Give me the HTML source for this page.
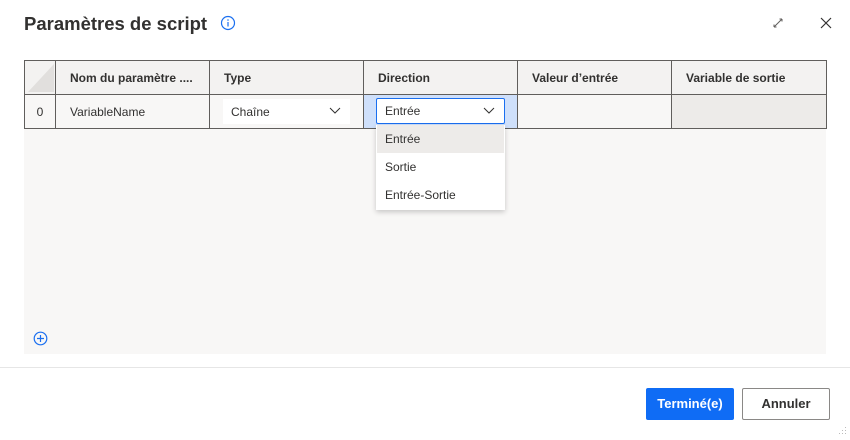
<!DOCTYPE html>
<html><head><style>
*{box-sizing:border-box;margin:0;padding:0}
body{width:850px;height:440px;background:#fff;font-family:"Segoe UI","Liberation Sans",sans-serif;color:#323130;position:relative;overflow:hidden}
.a{position:absolute}
.title{left:24px;top:13px;font-size:18.5px;font-weight:bold;color:#323130}
.grid{left:24px;top:60px;width:802px;height:294px;background:#f8f7f6}
table{position:absolute;left:24px;top:60px;border-collapse:collapse;font-size:12px}
td{border:1px solid #605e5c;height:34px;padding:0 0 0 14px}
thead td{background:#f3f2f1;font-weight:600;height:34px}
tbody td{background:#f8f7f6}
</style></head><body>
<div class="a title">Paramètres de script</div>
<svg class="a" style="left:220px;top:15px" width="16" height="16" viewBox="0 0 16 16"><circle cx="8" cy="8" r="6.5" fill="none" stroke-width="1.2" style="stroke:#1a6ff0"/><rect x="7.4" y="7" width="1.2" height="4.5" fill="#1a6ff0"/><circle cx="8" cy="5" r=".8" fill="#1a6ff0"/></svg>
<svg class="a" style="left:772px;top:17px" width="12" height="12" viewBox="0 0 12 12"><path d="M2 10L10 2M2 10V7.5M2 10H4.5M10 2V4.5M10 2H7.5" stroke="#605e5c" stroke-width="1" fill="none"/></svg>
<svg class="a" style="left:820px;top:17px" width="12" height="12" viewBox="0 0 12 12"><path d="M1 1L11 11M11 1L1 11" stroke="#323130" stroke-width="1.2"/></svg>
<div class="a grid"></div>
<table>
<thead><tr>
<td style="width:31px;padding:0;position:relative"><svg style="position:absolute;left:3px;top:3px" width="26" height="28"><path d="M26 0V28H0Z" fill="#e1dfdd"/></svg></td>
<td style="width:154px">Nom du paramètre ....</td>
<td style="width:154px">Type</td>
<td style="width:154px">Direction</td>
<td style="width:154px">Valeur d’entrée</td>
<td style="width:155px">Variable de sortie</td>
</tr></thead>
<tbody><tr>
<td style="padding:0;text-align:center">0</td>
<td>VariableName</td>
<td style="padding:0"></td>
<td style="padding:0;background:#cfe0fb"></td>
<td></td>
<td style="background:#edebe9"></td>
</tr></tbody>
</table>
<div class="a" style="left:223px;top:99px;width:127px;height:25px;background:#fff;font-size:12px;line-height:26px;padding-left:8px">Chaîne</div>
<svg class="a" style="left:329px;top:107px" width="12" height="8"><path d="M1 1L6 6L11 1" stroke="#323130" fill="none"/></svg>
<div class="a" style="left:376px;top:98px;width:129px;height:26px;background:#fff;border:1px solid #1a6ff0;border-radius:2px;font-size:12px;line-height:25px;padding-left:8px">Entrée</div>
<svg class="a" style="left:483px;top:107px" width="12" height="8"><path d="M1 1L6 6L11 1" stroke="#323130" fill="none"/></svg>
<div class="a" style="left:376px;top:125px;width:129px;height:85px;background:#fff;box-shadow:0 2px 5px rgba(0,0,0,.2);font-size:12px">
<div style="height:28px;line-height:29px;padding-left:8px;background:#edebe9;margin:0 1px">Entrée</div>
<div style="height:28px;line-height:29px;padding-left:9px">Sortie</div>
<div style="height:28px;line-height:29px;padding-left:9px">Entrée-Sortie</div>
</div>
<svg class="a" style="left:33px;top:331px" width="15" height="15"><circle cx="7.5" cy="7.5" r="6.3" fill="none" stroke="#1a6ff0" stroke-width="1.2"/><path d="M7.5 4V11M4 7.5H11" stroke="#1a6ff0" stroke-width="1.2"/></svg>
<div class="a" style="left:0;top:367px;width:850px;height:1px;background:#e6e6e6"></div>
<div class="a" style="left:646px;top:388px;width:88px;height:32px;background:#0f6cf5;border-radius:2px;color:#fff;font-size:13px;font-weight:600;text-align:center;line-height:32px">Terminé(e)</div>
<div class="a" style="left:742px;top:388px;width:88px;height:32px;border:1px solid #8a8886;border-radius:2px;font-size:13px;font-weight:600;text-align:center;line-height:30px">Annuler</div>
<svg class="a" style="left:836px;top:426px" width="12" height="12"><g fill="#bbb"><rect x="9" y="1" width="1" height="1"/><rect x="6" y="4" width="1" height="1"/><rect x="9" y="4" width="1" height="1"/><rect x="3" y="7" width="1" height="1"/><rect x="6" y="7" width="1" height="1"/><rect x="9" y="7" width="1" height="1"/></g></svg>
</body></html>
